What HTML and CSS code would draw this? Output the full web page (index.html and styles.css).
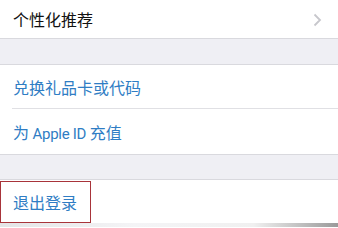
FILE: index.html
```html
<!DOCTYPE html>
<html lang="zh">
<head>
<meta charset="utf-8">
<link rel="stylesheet" href="styles.css">
</head>
<body>
<div class="page">
  <div class="row row-top">
    <span class="label">个性化推荐</span>
    <svg class="chevron" width="9" height="14" viewBox="0 0 9 14"><path d="M1.5 1.5 L7 7 L1.5 12.5" fill="none" stroke="#c7c7cc" stroke-width="1.8"/></svg>
  </div>
  <div class="band band-a"></div>
  <div class="group">
    <div class="row row-mid link"><span class="label">兑换礼品卡或代码</span></div>
    <div class="row row-mid2 link"><span class="label">为 <span class="latin">Apple ID</span> 充值</span></div>
  </div>
  <div class="band band-b"></div>
  <div class="row row-out link">
    <span class="label">退出登录</span>
    <div class="highlight"></div>
  </div>
  <div class="foot"></div>
</div>
</body>
</html>
```

FILE: styles.css
```css
html, body {
  margin: 0;
  padding: 0;
  background: #ffffff;
}
.page {
  width: 338px;
  height: 228px;
  overflow: hidden;
  font-family: "Noto Sans CJK SC", "Noto Sans", sans-serif;
  font-size: 16px;
  color: #111111;
}
.row {
  display: flex;
  align-items: center;
  justify-content: space-between;
  padding: 0 16px 0 13px;
  background: #ffffff;
  position: relative;
}
.row-top { height: 38px; }
.chevron { margin-top: 1px; }
.band {
  background: #efeff4;
  border-top: 1px solid #d9d9de;
  border-bottom: 1px solid #d9d9de;
}
.band-a { height: 25px; }
.band-b { height: 24px; }
.link { color: #2f7dc4; }
.latin {
  font-family: "Roboto", "Noto Sans", sans-serif;
  font-size: 15px;
  letter-spacing: -0.3px;
}
.row-mid {
  height: 44px;
}
.row-mid::after {
  content: "";
  position: absolute;
  left: 12px;
  right: 0;
  bottom: 0;
  height: 1px;
  background: #e0e0e4;
}
.row-mid2 { height: 45px; }
.row-out { height: 43px; }
.highlight {
  position: absolute;
  left: 0;
  top: 1px;
  width: 91px;
  height: 42px;
  border: 1px solid #a8343a;
  box-sizing: border-box;
}
.foot {
  height: 4px;
  background: linear-gradient(to right, #e4e4e6 0%, #f4f4f6 40%, #f0f0f0 75%, #9a9a9a 100%);
}
```
